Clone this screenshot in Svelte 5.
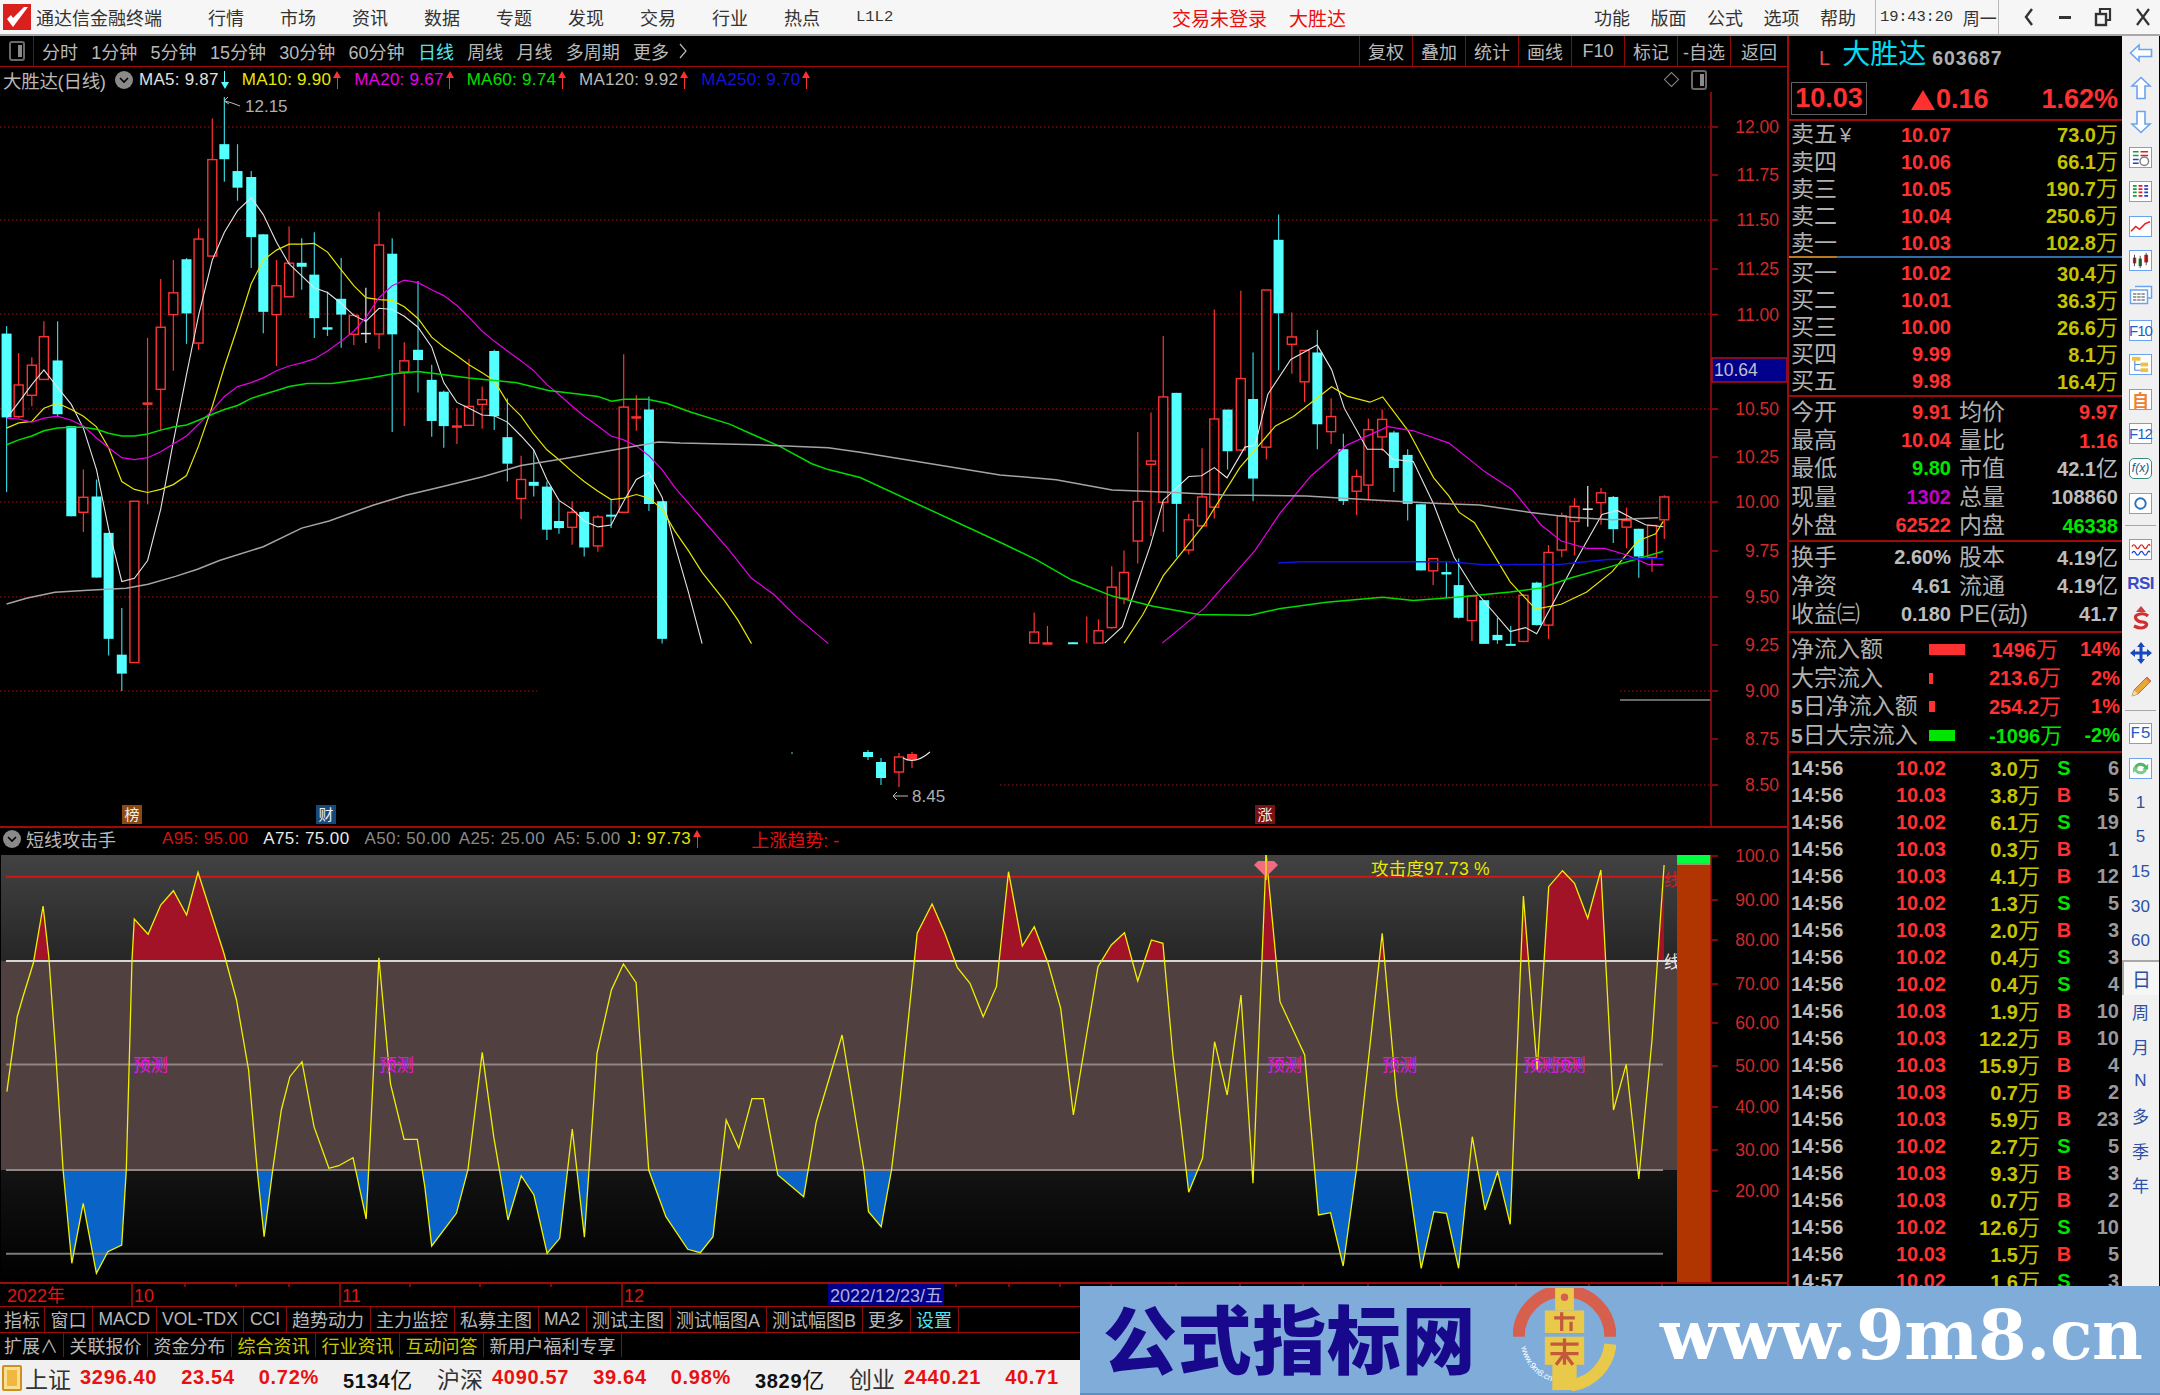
<script>
  const z9 = (a) => a.map(([x, y]) => [x / 1.823, 90 + y / 2.529]);
  const z10 = (a) => a.map(([x, y]) => [1000 + x / 1.96, 190 + y / 2.45]);
  const z7 = (a) => a.map(([x, y]) => [x / 1.742, 820 + y / 3]);
  const z8 = (a) => a.map(([x, y]) => [900 + x / 1.742, 820 + y / 3]);
  const pts = (a) => a.map(([x, y]) => x.toFixed(1) + ',' + y.toFixed(1)).join(' ');

  const c9 = [
    [12,597,1017,616,828,'c'],[34,665,830,746,826,'r'],[58,676,800,696,772,'r'],[80,585,730,624,732,'r'],[105,585,825,684,820,'c'],
    [130,850,1078,850,1078,'c'],[152,960,1118,1030,1068,'r'],[176,985,1233,1028,1233,'c'],[198,1120,1430,1120,1388,'c'],[222,1310,1520,1428,1476,'c'],
    [245,1040,1448,1040,1448,'r'],[269,627,1048,790,796,'d'],[293,478,860,600,757,'r'],[316,430,710,513,568,'r'],[340,425,642,428,565,'c'],
    [362,350,657,377,640,'r'],[387,72,420,176,420,'r'],[409,18,232,137,175,'c'],[433,137,280,205,247,'c'],[458,205,450,220,372,'c'],
    [480,365,615,365,561,'c'],[504,430,698,495,568,'r'],[527,345,523,438,523,'r'],[550,375,505,437,447,'c'],[573,360,627,467,577,'c'],
    [597,510,622,600,606,'c'],[622,425,652,528,568,'c'],[645,565,645,570,618,'r'],[667,500,640,616,619,'w'],[691,308,655,392,617,'r'],
    [715,375,865,414,618,'c'],[737,638,850,685,713,'r'],[762,483,765,657,683,'c'],[787,695,877,733,837,'c'],[809,760,905,763,850,'c'],
    [833,805,895,848,853,'d'],[855,680,850,800,848,'r'],[879,750,857,783,795,'r'],[901,657,860,660,825,'c'],[925,780,990,878,945,'c'],
    [950,925,1085,985,1033,'r'],[973,910,1028,991,1001,'c'],[997,990,1138,1003,1112,'c'],[1019,1040,1122,1090,1108,'c'],[1043,1040,1150,1068,1106,'r'],
    [1065,1065,1180,1067,1157,'c'],[1090,1075,1168,1080,1153,'r'],[1114,1035,1108,1074,1077,'c'],[1137,668,1070,802,1068,'r'],[1160,772,862,825,831,'d'],
    [1183,775,1065,808,1047,'c'],[1207,1040,1400,1040,1388,'c']
  ];
  const c10 = [
    [67,1035,1110,1083,1110,'r'],[93,1068,1110,1108,1110,'d'],[143,1108,1110,1108,1110,'c'],[170,1045,1110,1110,1110,'r'],[193,1052,1110,1080,1110,'r'],
    [219,922,1075,973,1072,'r'],[243,883,1015,937,1000,'r'],[270,593,915,763,860,'r'],[296,545,848,664,672,'r'],[320,358,838,507,765,'r'],
    [346,497,900,497,769,'c'],[370,793,893,808,882,'r'],[396,633,825,752,823,'r'],[420,293,805,561,777,'r'],[446,538,685,538,640,'c'],
    [472,247,640,462,637,'r'],[496,398,762,512,707,'c'],[522,245,660,245,630,'r'],[546,60,442,122,302,'c'],[572,300,450,360,378,'r'],
    [597,393,520,393,470,'r'],[622,343,635,398,574,'c'],[649,510,622,555,592,'r'],[673,597,772,635,762,'c'],[699,685,797,702,738,'r'],
    [722,560,757,587,723,'r'],[749,538,640,562,605,'r'],[772,590,740,594,681,'c'],[799,635,810,649,769,'c'],[825,770,932,770,932,'c'],
    [849,903,968,903,933,'r'],[875,912,1000,936,942,'c'],[899,903,1050,968,1048,'c'],[925,992,1105,995,1055,'r'],[949,1005,1112,1005,1112,'c'],
    [975,1048,1112,1090,1103,'c'],[1001,1068,1112,1112,1112,'c'],[1026,990,1108,993,1106,'r'],[1052,960,1067,962,1066,'c'],[1075,870,1100,888,1066,'r'],
    [1101,790,900,798,882,'r'],[1126,755,895,775,812,'r'],[1152,725,825,782,785,'w'],[1178,730,820,742,766,'r'],[1202,750,865,752,831,'c'],
    [1228,778,878,810,826,'r'],[1252,830,950,830,898,'c'],[1278,820,935,822,900,'r'],[1302,748,855,752,808,'r']
  ];
  const candles = [
    ...c9.map(([x,h,l,t,b,k]) => ({ x: x/1.823, h: 90+h/2.529, l: 90+l/2.529, t: 90+t/2.529, b: 90+b/2.529, k })),
    ...c10.map(([x,h,l,t,b,k]) => ({ x: 1000+x/1.96, h: 190+h/2.45, l: 190+l/2.45, t: 190+t/2.45, b: 190+b/2.45, k })),
    { x: 868, h: 750, l: 760, t: 752, b: 757, k: 'c' },
    { x: 881, h: 758, l: 785, t: 762, b: 778, k: 'c' },
    { x: 899, h: 753, l: 787, t: 757, b: 772, k: 'r' },
    { x: 912, h: 752, l: 768, t: 754, b: 760, k: 'd' }
  ];

  const ma = [
    { c: '#e4e4e4', w: 1.1, s: pts(z9([[12,830],[34,790],[58,745],[80,708],[105,752],[130,795],[152,855],[176,960],[198,1110],[222,1243],[245,1235],[269,1190],[293,1060],[316,890],[340,720],[362,570],[387,430],[409,360],[433,305],[458,272],[480,315],[504,385],[527,440],[550,470],[573,500],[597,512],[622,540],[645,570],[667,585],[691,552],[715,555],[737,572],[762,600],[787,650],[809,740],[833,790],[855,805],[879,822],[901,824],[925,840],[950,875],[973,910],[997,985],[1019,1038],[1043,1060],[1065,1090],[1090,1105],[1114,1100],[1137,1040],[1160,985],[1183,968],[1207,1030],[1230,1150],[1255,1270],[1280,1400]])) },
    { c: '#e4e4e4', w: 1.1, s: pts(z10([[205,1110],[240,1070],[270,960],[295,870],[320,760],[370,702],[395,700],[420,680],[445,705],[480,630],[500,625],[525,500],[570,415],[622,380],[650,440],[675,535],[720,635],[750,635],[770,660],[810,665],[850,770],[890,900],[930,980],[1000,1082],[1030,1072],[1052,1087],[1085,1010],[1130,905],[1180,795],[1210,785],[1240,805],[1265,820],[1300,825]])) },
    { c: '#e6e600', w: 1.2, s: pts(z9([[12,855],[34,842],[58,838],[80,805],[105,792],[130,808],[152,825],[176,852],[198,905],[222,990],[245,1010],[269,1018],[293,1010],[316,998],[340,975],[362,900],[387,800],[409,700],[433,600],[458,490],[480,430],[504,405],[527,390],[550,390],[573,388],[597,410],[622,455],[645,495],[667,525],[691,530],[715,532],[737,548],[762,578],[787,625],[809,650],[833,672],[855,695],[879,715],[901,735],[925,790],[950,825],[973,870],[997,910],[1019,935],[1043,965],[1065,990],[1090,1015],[1114,1036],[1137,1032],[1160,1023],[1183,1032],[1207,1060],[1230,1115],[1255,1165],[1280,1220],[1320,1290],[1345,1340],[1370,1400]])) },
    { c: '#e6e600', w: 1.2, s: pts(z10([[243,1110],[280,1040],[320,945],[400,820],[470,680],[540,578],[575,555],[650,482],[680,505],[725,520],[750,507],[800,590],[850,705],[880,750],[900,790],[930,815],[1000,960],[1050,1027],[1100,1015],[1150,985],[1200,935],[1250,860],[1285,842],[1300,812]])) },
    { c: '#e600e6', w: 1.2, s: pts(z9([[12,830],[34,832],[58,840],[80,830],[105,825],[130,835],[152,850],[176,880],[198,905],[222,930],[245,935],[269,930],[293,915],[316,895],[340,875],[362,845],[387,810],[409,775],[433,750],[458,740],[480,728],[504,710],[527,698],[550,690],[573,680],[597,660],[622,635],[645,610],[667,575],[691,525],[715,495],[737,481],[762,487],[787,505],[809,520],[833,545],[855,575],[879,610],[901,635],[925,660],[950,685],[973,710],[997,745],[1019,770],[1043,800],[1065,825],[1090,850],[1114,875],[1137,885],[1160,900],[1183,925],[1207,960],[1230,1005],[1255,1045],[1280,1085],[1330,1165],[1370,1235],[1410,1275],[1450,1330],[1510,1400]])) },
    { c: '#e600e6', w: 1.2, s: pts(z10([[318,1110],[400,1025],[500,883],[550,790],[610,700],[680,625],[760,580],[810,590],[880,620],[950,690],[1005,735],[1060,820],[1100,860],[1150,878],[1185,878],[1230,895],[1270,917],[1300,918]])) },
    { c: '#00dc00', w: 1.5, s: pts([...z9([[12,897],[34,885],[58,875],[80,862],[105,855],[130,853],[152,853],[176,858],[198,868],[222,875],[245,875],[269,870],[293,860],[316,852],[340,847],[362,835],[387,820],[409,808],[433,798],[458,780],[480,770],[504,760],[527,750],[560,742],[605,742],[645,735],[680,727],[715,718],[762,712],[810,720],[855,728],[901,735],[940,740],[1000,760],[1050,768],[1090,775],[1115,787],[1137,782],[1180,782],[1215,792],[1260,815],[1330,845],[1370,870],[1420,900],[1480,945],[1510,960],[1568,980]]), ...z10([[0,863],[70,905],[140,955],[220,995],[300,1020],[390,1040],[490,1042],[550,1025],[640,1010],[750,998],[810,1006],[900,997],[1000,985],[1060,975],[1120,950],[1190,925],[1240,907],[1300,885]])]) },
    { c: '#a4a4a4', w: 1.5, s: pts([...z9([[12,1300],[50,1285],[100,1270],[160,1265],[230,1260],[270,1250],[320,1230],[360,1212],[400,1190],[480,1155],[550,1108],[600,1090],[680,1050],[740,1025],[800,1005],[880,978],[950,950],[1030,932],[1100,915],[1180,895],[1200,890],[1240,893],[1380,897],[1510,905],[1568,916]]), ...z10([[0,698],[110,710],[220,735],[320,740],[440,747],[600,750],[740,760],[860,768],[940,772],[1040,790],[1120,802],[1200,808],[1290,803]])]) },
    { c: '#1010e8', w: 1.5, s: pts(z10([[545,914],[590,911],[880,911],[950,918],[1100,917],[1190,905],[1300,903]])) }
  ];

  const grid = [[127,0],[220,0],[314,0],[409,0],[502,0],[597,0],[691,0,537],[691,1620],[785,1000]];
  const priceLabels = [['12.00',127],['11.75',175],['11.50',220],['11.25',269],['11.00',314.5],['10.50',409],['10.25',457],['10.00',502],['9.75',551],['9.50',597],['9.25',645],['9.00',691],['8.75',739],['8.50',785]];

  const jLine = [
    ...z7([[12,815],[18,740],[30,590],[40,530],[58,430],[75,258],[85,410],[97,700],[110,1050],[125,1330],[145,1150],[168,1360],[188,1295],[212,1275],[220,1050],[230,420],[234,297],[258,343],[280,255],[302,212],[325,285],[345,157],[390,400],[412,540],[433,750],[448,1050],[460,1250],[475,1050],[490,870],[505,770],[526,725],[547,920],[573,1045],[590,1037],[615,1013],[638,1197],[645,950],[660,413],[680,790],[704,958],[727,958],[740,1100],[752,1278],[795,1180],[815,1050],[840,697],[860,950],[885,1200],[908,1067],[930,1125],[953,1300],[975,1255],[997,927],[1018,1252],[1040,700],[1065,510],[1086,432],[1108,488],[1130,1050],[1160,1190],[1198,1288],[1220,1298],[1242,1250],[1265,900],[1287,985],[1310,836],[1330,836],[1355,1065],[1400,1130],[1422,905],[1467,645],[1505,1050],[1513,1175],[1535,1220],[1553,1050]]),
    ...z8([[0,840],[30,340],[56,252],[78,340],[100,443],[122,490],[145,590],[168,500],[189,155],[213,378],[234,320],[258,430],[280,565],[302,885],[325,645],[345,440],[368,375],[391,338],[414,483],[438,360],[458,370],[475,700],[503,1117],[527,1015],[548,665],[570,825],[594,525],[615,1090],[638,105],[662,545],[705,705],[729,1185],[750,1178],[772,1338],[795,1050],[840,340],[865,830],[908,1345],[930,1175],[952,1180],[973,1345],[997,950],[1019,1170],[1041,1055],[1063,1213],[1086,228],[1110,750],[1130,200],[1154,152],[1175,190],[1198,295],[1221,150],[1243,870],[1265,733],[1287,1077],[1310,660],[1331,135]])
  ];
  const xa = jLine[0][0], xb = jLine[jLine.length - 1][0];
  const jStr = pts(jLine);
  const redPoly = jStr + ` ${xb},961 ${xa},961`;
  const bluePoly = jStr + ` ${xb},1170 ${xa},1170`;
  const indLabels = [['100.0',856],['90.00',900],['80.00',940],['70.00',984],['60.00',1023],['50.00',1066],['40.00',1107],['30.00',1150],['20.00',1191]];
  const predict = [133,379,1267,1382];
  const dateTicks = [185,236,289,410,480,551,956,1009,1060,1111,1176,1240,1303,1368,1441,1516,1589,1662];

  const menus = ['行情','市场','资讯','数据','专题','发现','交易','行业','热点','L1L2'];
  const rightMenus = ['功能','版面','公式','选项','帮助'];
  const periods = ['分时','1分钟','5分钟','15分钟','30分钟','60分钟','日线','周线','月线','多周期','更多'];
  const tools = ['复权','叠加','统计','画线','F10','标记','-自选','返回'];
  const sells = [['卖五','10.07','73.0'],['卖四','10.06','66.1'],['卖三','10.05','190.7'],['卖二','10.04','250.6'],['卖一','10.03','102.8']];
  const buys = [['买一','10.02','30.4'],['买二','10.01','36.3'],['买三','10.00','26.6'],['买四','9.99','8.1'],['买五','9.98','16.4']];
  const stats = [
    ['今开','9.91','red','均价','9.97','red',''],['最高','10.04','red','量比','1.16','red',''],['最低','9.80','grn','市值','42.1','gry','亿'],
    ['现量','1302','mag','总量','108860','gry',''],['外盘','62522','red','内盘','46338','grn','']
  ];
  const stats2 = [['换手','2.60%','股本','4.19'],['净资','4.61','流通','4.19'],['收益㈢','0.180','PE(动)','41.7']];
  const flows = [
    ['','净流入额','red','b36','1496','14%'],['','大宗流入','red','b4','213.6','2%'],['5日','净流入额','red','b6','254.2','1%'],['5日','大宗流入','grn','b26','-1096','-2%']
  ];
  const ticks = [
    ['14:56','10.02','3.0','S','6'],['14:56','10.03','3.8','B','5'],['14:56','10.02','6.1','S','19'],['14:56','10.03','0.3','B','1'],['14:56','10.03','4.1','B','12'],
    ['14:56','10.02','1.3','S','5'],['14:56','10.03','2.0','B','3'],['14:56','10.02','0.4','S','3'],['14:56','10.02','0.4','S','4'],['14:56','10.03','1.9','B','10'],
    ['14:56','10.03','12.2','B','10'],['14:56','10.03','15.9','B','4'],['14:56','10.03','0.7','B','2'],['14:56','10.03','5.9','B','23'],['14:56','10.02','2.7','S','5'],
    ['14:56','10.03','9.3','B','3'],['14:56','10.03','0.7','B','2'],['14:56','10.02','12.6','S','10'],['14:56','10.03','1.5','B','5'],['14:57','10.02','1.6','S','3']
  ];
  const tabs1 = [['指标','f1'],['窗口'],['MACD','la'],['VOL-TDX','la'],['CCI','la'],['趋势动力'],['主力监控'],['私募主图'],['MA2','la'],['测试主图'],['测试幅图A'],['测试幅图B'],['更多'],['设置','cy']];
  const tabs2 = [['扩展∧','f2'],['关联报价'],['资金分布'],['综合资讯','yl'],['行业资讯','yl'],['互动问答','yl'],['新用户福利专享']];
  const small = ['1','5','15','30','60'];
  const lower = ['周','月','N','多','季','年'];
</script>

<div class="app">
  <header class="top">
    <svg class="logo" viewBox="0 0 28 26"><rect width="28" height="26" fill="#d9201c"/><path d="M4 15 L10 23 L25 3 L21 3 L10 14 L8 11 Z" fill="#fff"/></svg>
    <span class="brand">通达信金融终端</span>
    <nav class="menu">{#each menus as m}<span class:mono={m === 'L1L2'}>{m}</span>{/each}</nav>
    <div class="login"><span>交易未登录</span><span>大胜达</span></div>
    <nav class="menu rm">{#each rightMenus as m}<span>{m}</span>{/each}</nav>
    <div class="clock"><span class="t">19:43:20</span><span>周一</span></div>
    <div class="win">
      <svg width="12" height="22" viewBox="0 0 12 22"><path d="M9 3 L3 11 L9 19" fill="none" stroke="#333" stroke-width="2.4"/></svg>
      <svg width="14" height="22" viewBox="0 0 14 22"><rect x="1" y="10" width="12" height="3" fill="#333"/></svg>
      <svg width="18" height="22" viewBox="0 0 18 22"><rect x="2" y="8" width="10" height="11" fill="none" stroke="#333" stroke-width="2.4"/><path d="M6 7 V3 H16 V14 H13" fill="none" stroke="#333" stroke-width="2.2"/></svg>
      <svg width="16" height="22" viewBox="0 0 16 22"><path d="M2 3 L14 19 M14 3 L2 19" stroke="#333" stroke-width="2.2"/></svg>
    </div>
  </header>

  <div class="body">
    <main class="left">
      <div class="toolbar">
        <div class="tbtn"><span class="panelbtn"></span></div>
        <div class="periods">
          {#each periods as p}<span class:act={p === '日线'}>{p}</span>{/each}
          <svg class="chev" width="10" height="18" viewBox="0 0 10 18"><path d="M2 2 L8 9 L2 16" fill="none" stroke="#b8b8b8" stroke-width="1.2"/></svg>
        </div>
        <div class="tools">{#each tools as t}<span>{t}</span>{/each}</div>
      </div>

      <div class="infobar">
        <span class="name">大胜达(日线)</span>
        <span class="dot"><svg width="14" height="14" viewBox="0 0 14 14"><path d="M3 5 L7 9 L11 5" fill="none" stroke="#000" stroke-width="1.6"/></svg></span>
        <span class="mai w">MA5: 9.87<i class="ar dn"></i></span>
        <span class="mai y">MA10: 9.90<i class="ar"></i></span>
        <span class="mai m">MA20: 9.67<i class="ar"></i></span>
        <span class="mai g">MA60: 9.74<i class="ar"></i></span>
        <span class="mai s">MA120: 9.92<i class="ar"></i></span>
        <span class="mai bl">MA250: 9.70<i class="ar"></i></span>
        <span class="spacer"></span>
        <span class="diamond"></span>
        <span class="panelbtn sm"></span>
      </div>

      <svg class="main" viewBox="0 92 1787 734" width="1787" height="734">
        {#each grid as [y, x0, x1]}
          <line x1={x0} x2={x1 ?? 1711} y1={y} y2={y} class="gridl"/>
        {/each}
        <line x1="1620" x2="1711" y1="700" y2="700" stroke="#8a8a8a" stroke-width="1.5"/>
        <line x1="1711" x2="1711" y1="92" y2="826" class="axis"/>
        {#each priceLabels as [t, y]}
          <line x1="1712" x2="1718" y1={y} y2={y} class="axis"/>
          <text x="1779" y={y + 6} class="ax">{t}</text>
        {/each}
        <rect x="1712" y="358" width="75" height="24" fill="#00008c" stroke="#b01010" stroke-width="1.5"/>
        <text x="1714" y="376" class="boxt">10.64</text>

        {#each candles as c}
          {#if c.k === 'c'}
            <line x1={c.x} x2={c.x} y1={c.h} y2={c.l} stroke="#35d0d8" stroke-width="1.2"/>
            <rect x={c.x - 5} y={c.t} width="10" height={Math.max(c.b - c.t, 2)} fill="#54ffff"/>
          {:else if c.k === 'w'}
            <line x1={c.x} x2={c.x} y1={c.h} y2={c.l} stroke="#e8e8e8" stroke-width="1.2"/>
            <line x1={c.x - 5} x2={c.x + 5} y1={c.t} y2={c.t} stroke="#e8e8e8" stroke-width="1.5"/>
          {:else if c.k === 'd'}
            <line x1={c.x} x2={c.x} y1={c.h} y2={c.l} class="rw"/>
            <rect x={c.x - 5} y={c.t} width="10" height={Math.max(c.b - c.t, 2.5)} fill="#ff3232"/>
          {:else}
            <line x1={c.x} x2={c.x} y1={c.h} y2={c.t} class="rw"/>
            <line x1={c.x} x2={c.x} y1={c.b} y2={c.l} class="rw"/>
            <rect x={c.x - 4.5} y={c.t} width="9" height={c.b - c.t} fill="#000" class="rb"/>
          {/if}
        {/each}

        {#each ma as l}
          <polyline points={l.s} fill="none" stroke={l.c} stroke-width={l.w}/>
        {/each}
        <path d="M903 758 Q915 765 930 752" fill="none" stroke="#e8e8e8" stroke-width="1.1"/>
        <circle cx="792" cy="753" r="1" fill="#3a8a8a"/>

        <path d="M224 101 L228 97 M224 101 L229 104 M225 101 L232 103 L240 106" fill="none" stroke="#bbb" stroke-width="1"/>
        <text x="245" y="112" class="hl">12.15</text>
        <path d="M908 796 H893 M893 796 L897 792 M893 796 L897 800" fill="none" stroke="#bbb" stroke-width="1"/>
        <text x="912" y="802" class="hl">8.45</text>

        <rect x="122" y="805" width="20" height="19" fill="#8c4a12"/>
        <text x="132" y="820" class="tag">榜</text>
        <rect x="316" y="805" width="20" height="19" fill="#174a7c"/>
        <text x="326" y="820" class="tag">财</text>
        <rect x="1255" y="805" width="20" height="19" fill="#7a1212"/>
        <text x="1265" y="820" class="tag">涨</text>
      </svg>

      <div class="indhead">
        <span class="dot"><svg width="14" height="14" viewBox="0 0 14 14"><path d="M3 5 L7 9 L11 5" fill="none" stroke="#000" stroke-width="1.6"/></svg></span>
        <span class="indname">短线攻击手</span>
        <span class="ia dr">A95: 95.00</span>
        <span class="ia w2">A75: 75.00</span>
        <span class="ia gy g8">A50: 50.00</span>
        <span class="ia gy g9">A25: 25.00</span>
        <span class="ia gy g7">A5: 5.00</span>
        <span class="ia yl2">J: 97.73<i class="ar"></i></span>
        <span class="trend">上涨趋势: -</span>
      </div>

      <svg class="ind" viewBox="0 855 1787 451" width="1787" height="451">
        <defs>
          <linearGradient id="bandA" x1="0" x2="0" y1="0" y2="1"><stop offset="0" stop-color="#424242"/><stop offset="1" stop-color="#262626"/></linearGradient>
          <linearGradient id="bandC" x1="0" x2="0" y1="0" y2="1"><stop offset="0" stop-color="#131313"/><stop offset="1" stop-color="#000"/></linearGradient>
          <clipPath id="upClip"><rect x="0" y="855" width="1680" height="106"/></clipPath>
          <clipPath id="dnClip"><rect x="0" y="1170" width="1680" height="112"/></clipPath>
        </defs>
        <rect x="1" y="855" width="1676" height="106" fill="url(#bandA)"/>
        <rect x="1" y="961" width="1676" height="209" fill="#514040"/>
        <rect x="1" y="1170" width="1676" height="112" fill="url(#bandC)"/>

        <polygon points={redPoly} fill="#a31327" clip-path="url(#upClip)"/>
        <polygon points={bluePoly} fill="#0a63c7" clip-path="url(#dnClip)"/>

        <line x1="6" x2="1677" y1="876.7" y2="876.7" stroke="#d01818" stroke-width="2"/>
        <line x1="6" x2="1677" y1="961" y2="961" stroke="#d8d4d4" stroke-width="2"/>
        <line x1="6" x2="1663" y1="1064.5" y2="1064.5" stroke="#8e8585" stroke-width="2"/>
        <line x1="6" x2="1663" y1="1170" y2="1170" stroke="#8e8888" stroke-width="2"/>
        <line x1="6" x2="1663" y1="1253.7" y2="1253.7" stroke="#7c7c7c" stroke-width="2"/>

        <polyline points={jStr} fill="none" stroke="#f0f000" stroke-width="1.3"/>

        {#each predict as x}
          <text x={x} y="1071" class="pred">预测</text>
        {/each}
        <text x="1523" y="1071" class="pred tight">预测预测</text>
        <text x="1371" y="875" class="atk">攻击度97.73 %</text>
        <polygon points="1254,865 1258,861 1274,861 1278,865 1266,877" fill="#f06a80"/>
        <line x1="1266" x2="1266" y1="855" y2="880" stroke="#f0f000" stroke-width="1.3"/>
        <text x="1664" y="886" class="xian rd">线</text>
        <text x="1664" y="968" class="xian">线</text>

        <rect x="1677" y="855" width="34" height="8" fill="#00ff3c"/>
        <rect x="1677" y="863" width="34" height="2" fill="#9a9a6a"/>
        <rect x="1677" y="865" width="34" height="417" fill="#b03500"/>
        <line x1="1711" x2="1711" y1="855" y2="1282" class="axis"/>
        {#each indLabels as [t, y]}
          <line x1="1712" x2="1718" y1={y} y2={y} class="axis"/>
          <text x="1779" y={y + 6} class="ax">{t}</text>
        {/each}

        <rect x="0" y="1282" width="1787" height="2" fill="#a00a0a"/>
        {#each dateTicks as x}<line x1={x} x2={x} y1="1284" y2="1287" class="axis"/>{/each}
        {#each [[132,'10'],[340,'11'],[622,'12']] as [x, t]}
          <line x1={x} x2={x} y1="1284" y2="1306" class="axis"/>
          <text x={x + 2} y="1302" class="dt">{t}</text>
        {/each}
        <text x="7" y="1302" class="dt">2022年</text>
        <rect x="828" y="1284" width="116" height="21" fill="#00008c"/>
        <text x="830" y="1302" class="dtb">2022/12/23/五</text>
      </svg>

      <div class="tabs">
        {#each tabs1 as [t, c]}<span class={c}>{t}</span>{/each}
      </div>
      <div class="tabs">
        {#each tabs2 as [t, c]}<span class={c}>{t}</span>{/each}
      </div>
    </main>

    <aside class="quote">
      <div class="qhead"><span class="l">L</span><span class="qname">大胜达</span><span class="qcode">603687</span></div>
      <div class="qprice">
        <span class="pbox">10.03</span>
        <span class="chg"><i class="tri"></i>0.16</span>
        <span class="pct">1.62%</span>
      </div>
      <div class="lv-block first">
        {#each sells as [a, b, c], i}
          <div class="lv">
            <span class="lb">{a}{#if i === 0}<em class="yen">¥</em>{/if}</span>
            <span class="v red">{b}</span>
            <span class="v yel">{c}<u>万</u></span>
          </div>
        {/each}
      </div>
      <div class="midline"><i></i></div>
      <div class="lv-block">
        {#each buys as [a, b, c]}
          <div class="lv">
            <span class="lb">{a}</span>
            <span class="v red">{b}</span>
            <span class="v yel">{c}<u>万</u></span>
          </div>
        {/each}
      </div>
      <div class="sec stats">
        {#each stats as [a, b, bc, d, e, ec, u]}
          <div class="st">
            <span class="lb">{a}</span><span class="v {bc}">{b}</span>
            <span class="lb2">{d}</span><span class="v {ec}">{e}<u>{u}</u></span>
          </div>
        {/each}
      </div>
      <div class="sec stats s2">
        {#each stats2 as [a, b, d, e], i}
          <div class="st">
            <span class="lb">{a}</span><span class="v gry">{b}</span>
            <span class="lb2">{d}</span><span class="v gry">{e}<u>{i < 2 ? '亿' : ''}</u></span>
          </div>
        {/each}
      </div>
      <div class="sec flows">
        {#each flows as [p, a, c, bw, v, pc]}
          <div class="fl">
            <span class="lb">{#if p}<b>5</b>日{/if}{a}</span>
            <span class="barcell"><i class="bar {bw} {c}"></i></span>
            <span class="v {c}">{v}<u>万</u></span>
            <span class="v {c}">{pc}</span>
          </div>
        {/each}
      </div>
      <div class="sec ticks">
        {#each ticks as [t, p, v, f, n]}
          <div class="tk">
            <span class="v gry tl">{t}</span>
            <span class="v red">{p}</span>
            <span class="v yel">{v}<u>万</u></span>
            <span class="fg" class:red={f === 'B'} class:grn={f === 'S'}>{f}</span>
            <span class="v gry2">{n}</span>
          </div>
        {/each}
      </div>
    </aside>

    <aside class="side">
      <div class="si"><svg width="24" height="20" viewBox="0 0 24 20"><path d="M1.5 10 L10 2 V6.5 H22.5 V13.5 H10 V18 Z" fill="#fff" stroke="#6aa3f2" stroke-width="1.6"/></svg></div>
      <div class="si"><svg width="22" height="24" viewBox="0 0 22 24"><path d="M11 1.5 L20 10 H15 V22.5 H7 V10 H2 Z" fill="#fff" stroke="#6aa3f2" stroke-width="1.6"/></svg></div>
      <div class="si"><svg width="22" height="24" viewBox="0 0 22 24"><path d="M11 22.5 L20 14 H15 V1.5 H7 V14 H2 Z" fill="#fff" stroke="#6aa3f2" stroke-width="1.6"/></svg></div>
      <div class="si"><svg class="box" viewBox="0 0 22 20"><g stroke-width="1.6"><path d="M3 4 H9 M3 8 H9" stroke="#1a9a3a"/><path d="M11 4 H19 M11 8 H19" stroke="#e02020"/><path d="M3 12 H9 M3 16 H9" stroke="#2040c0"/></g><circle cx="15" cy="14" r="4.5" fill="#fff" stroke="#808080" stroke-width="1.5"/></svg></div>
      <div class="si"><svg class="box" viewBox="0 0 22 20"><g stroke-width="1.8"><path d="M3 4 H7 M3 7.5 H7 M3 11 H7 M3 14.5 H7" stroke="#1a9a3a"/><path d="M9 4 H13 M9 7.5 H13 M9 11 H13 M9 14.5 H13" stroke="#e02020"/><path d="M15 4 H19 M15 7.5 H19 M15 11 H19 M15 14.5 H19" stroke="#2040d0"/></g></svg></div>
      <div class="si"><svg class="box" viewBox="0 0 22 20"><path d="M1 15 L6 10 L10 13 L16 7 L21 5" fill="none" stroke="#e02020" stroke-width="1.6"/></svg></div>
      <div class="si"><svg class="box" viewBox="0 0 22 20"><g fill="#e01818"><rect x="3" y="7" width="3.5" height="6"/><rect x="15" y="4" width="4" height="8"/></g><rect x="9" y="8" width="3.5" height="8" fill="#0f8a30"/><path d="M4.7 4 V16 M10.7 5 V18 M17 2 V15" stroke="#222" stroke-width=".8"/></svg></div>
      <div class="si"><svg width="24" height="20" viewBox="0 0 24 20"><path d="M6 1.5 H22.5 V13 H19" fill="#fff" stroke="#6aa3f2" stroke-width="1.5"/><rect x="1.5" y="5" width="17" height="13.5" fill="#fff" stroke="#6aa3f2" stroke-width="1.5"/><path d="M4 9 H16 M4 12 H16 M4 15 H16" stroke="#808080" stroke-width="1.4" stroke-dasharray="3.4 .8"/></svg></div>
      <div class="si"><span class="box txt">F10</span></div>
      <div class="si"><svg class="box" viewBox="0 0 22 20"><rect x="2" y="2" width="9" height="4" fill="#f0c040"/><rect x="11" y="8" width="8" height="4" fill="#f0c040"/><rect x="11" y="14" width="8" height="4" fill="#f0c040"/><path d="M5 6 V16 H11 M5 10 H11" fill="none" stroke="#5a8ad0" stroke-width="1.2"/></svg></div>
      <div class="si"><span class="box txt or">自</span></div>
      <div class="si"><span class="box txt">F12</span></div>
      <div class="si"><span class="box txt fx">f(x)</span></div>
      <div class="si"><svg class="box" viewBox="0 0 22 20"><circle cx="11" cy="10" r="5.5" fill="none" stroke="#2a70c0" stroke-width="2"/></svg></div>
      <div class="sep"></div>
      <div class="si"><svg class="box" viewBox="0 0 22 20"><path d="M2 7 Q4 3 6 7 T10 7 T14 7 T18 7 T21 6" fill="none" stroke="#e02020" stroke-width="1.3"/><path d="M2 14 Q4 10 6 14 T10 14 T14 14 T18 14 T21 13" fill="none" stroke="#2040d0" stroke-width="1.3"/></svg></div>
      <div class="si"><span class="rsi">RSI</span></div>
      <div class="si"><svg width="22" height="26" viewBox="0 0 22 26"><path d="M11 1 L16 7 H6 Z" fill="#c84040"/><path d="M18 11 Q15 8 10 9 Q4 10 6 14 Q8 17 13 17 Q18 18 16 21 Q12 25 4 21" fill="none" stroke="#d03030" stroke-width="3.2"/></svg></div>
      <div class="si"><svg width="24" height="24" viewBox="0 0 24 24"><path d="M12 1 L16 6 H13.5 V10.5 H18 V8 L23 12 L18 16 V13.5 H13.5 V18 H16 L12 23 L8 18 H10.5 V13.5 H6 V16 L1 12 L6 8 V10.5 H10.5 V6 H8 Z" fill="#1848c0"/></svg></div>
      <div class="si"><svg width="24" height="24" viewBox="0 0 24 24"><path d="M3 21 L5 15 L18 2 L22 6 L9 19 Z" fill="#e8a838" stroke="#8a6a30" stroke-width=".8"/><path d="M16.5 3.5 L18 2 L22 6 L20.5 7.5 Z" fill="#e87060"/><path d="M3 21 L5 15 L9 19 Z" fill="#f0d8b0"/></svg></div>
      <div class="sep"></div>
      <div class="si"><span class="box txt f5">F5</span></div>
      <div class="si"><svg class="box" viewBox="0 0 22 20"><path d="M4 9 Q6 4 11 4 Q15 4 17 7 L19 5 V11 H13 L15 9 Q13 7 11 7 Q8 7 7 10 Z" fill="#52b868"/><path d="M18 11 Q16 16 11 16 Q7 16 5 13 L3 15 V9 H9 L7 11 Q9 13 11 13 Q14 13 15 10 Z" fill="#7acc88"/></svg></div>
      {#each small as s}<div class="si n">{s}</div>{/each}
      <div class="si n day">日</div>
      {#each lower as s}<div class="si n">{s}</div>{/each}
    </aside>
  </div>

  <footer class="status">
    <span class="sqi"></span>
    <span class="sl">上证</span><span class="sv first">3296.40</span><span class="sv">23.54</span><span class="sv">0.72%</span><span class="sk">5134<u>亿</u></span>
    <span class="sl nx">沪深</span><span class="sv first">4090.57</span><span class="sv">39.64</span><span class="sv">0.98%</span><span class="sk">3829<u>亿</u></span>
    <span class="sl nx">创业</span><span class="sv first">2440.21</span><span class="sv">40.71</span>
  </footer>

  <div class="wm">
    <span class="wt">公式指标网</span>
    <svg class="wl" viewBox="0 0 110 110" width="103" height="103">
      <defs><path id="wmArc" d="M9 63 A 47 47 0 0 0 46 101"/></defs>
      <path d="M6 52 A 49 49 0 0 1 104 52" fill="none" stroke="#d6604d" stroke-width="13"/>
      <path d="M104 60 A 49 49 0 0 1 62 104" fill="none" stroke="#e9c94a" stroke-width="13"/>
      <g fill="#e9c94a">
        <rect x="45" y="0" width="20" height="24"/>
        <rect x="34" y="24" width="42" height="24"/>
        <rect x="34" y="52" width="42" height="30"/>
        <rect x="42" y="80" width="26" height="29"/>
      </g>
      <circle cx="55" cy="10" r="4" fill="#d6604d"/>
      <g fill="none" stroke="#c4583c" stroke-width="3.5">
        <path d="M44 32 H66 M52 26 V46 M62 36 V46"/>
        <path d="M40 60 H70 M40 70 H70 M55 54 V82 M46 82 L55 70 L64 82"/>
      </g>
      <text class="wtp"><textPath href="#wmArc">www.9m8.cn</textPath></text>
    </svg>
    <span class="wu">www.9m8.cn</span>
  </div>
</div>

<style>
  :global(body) { margin: 0; background: #000; }
  .app {
    width: 2160px; height: 1395px; position: relative; overflow: hidden; background: #000;
    display: flex; flex-direction: column;
    font-family: "Liberation Sans", "Noto Sans CJK SC", sans-serif; color: #c0c0c0;
  }
  u { text-decoration: none; font-weight: 400; font-size: 22px; }
  i, em { font-style: normal; }

  /* top bar */
  .top {
    height: 34px; flex: none; background: #f6f6f6; border-bottom: 2px solid #a8a8a8;
    display: flex; align-items: center; color: #333; font-size: 18px;
  }
  .logo { width: 28px; height: 26px; margin-left: 3px; flex: none; }
  .brand { margin-left: 5px; width: 126px; white-space: nowrap; }
  .menu { display: flex; gap: 37px; margin-left: 46px; align-items: center; }
  .menu span { width: 35px; white-space: nowrap; }
  .menu .mono { font-family: "Liberation Mono", monospace; font-size: 15.5px; }
  .login { display: flex; gap: 22px; margin-left: 281px; color: #e81010; font-size: 19px; }
  .rm { gap: 21.5px; margin-left: 248px; }
  .clock {
    margin-left: 20px; width: 124px; height: 34px; box-sizing: border-box; padding-left: 4px; display: flex; align-items: center; gap: 10px;
    border-left: 1px solid #bbb; border-right: 1px solid #bbb; font-size: 17px;
  }
  .clock .t { font-family: "Liberation Mono", monospace; font-size: 15.5px; letter-spacing: -0.2px; }
  .win { display: flex; align-items: center; gap: 22.5px; margin-left: 24px; }

  .body { height: 1324px; flex: none; display: flex; }

  /* left column */
  .left { width: 1787px; flex: none; display: flex; flex-direction: column; }
  .toolbar {
    height: 30px; flex: none; display: flex; align-items: center; border-bottom: 1.5px solid #a00a0a; font-size: 18px; color: #b8b8b8;
  }
  .tbtn { width: 34px; height: 30px; display: flex; align-items: center; justify-content: center; border-right: 1px solid #7a0a0a; box-sizing: border-box; }
  .panelbtn { display: block; width: 16px; height: 20px; border: 2px solid #6a6a6a; border-radius: 3px; box-sizing: border-box; position: relative; }
  .panelbtn::after { content: ""; position: absolute; right: 1px; top: 2px; bottom: 2px; width: 4px; background: #8a8a8a; }
  .panelbtn.sm { margin-right: 80px; margin-left: 14px; }
  .periods { display: flex; align-items: center; gap: 13.3px; margin-left: 8px; white-space: nowrap; }
  .periods .act { color: #4fe6ee; }
  .chev { margin-left: -4px; }
  .tools { margin-left: auto; display: flex; height: 30px; }
  .tools span { width: 52px; border-left: 1px solid #8a0a0a; display: flex; align-items: center; justify-content: center; white-space: nowrap; }
  .tools span:last-child { width: 56px; }

  .infobar { height: 25px; flex: none; display: flex; align-items: center; font-size: 17px; letter-spacing: .25px; white-space: nowrap; padding-left: 3px; box-sizing: border-box; }
  .name { font-size: 18.5px; letter-spacing: -.3px; width: 112px; color: #b8b8b8; }
  .dot { width: 18px; height: 18px; border-radius: 50%; background: #8a8a8a; display: flex; align-items: center; justify-content: center; flex: none; }
  .infobar .dot { margin-right: 6px; }
  .mai { margin-right: 12px; display: flex; align-items: center; }
  .ar { display: inline-block; width: 10px; height: 18px; position: relative; margin-left: 1px; flex: none; }
  .ar::before { content: ""; position: absolute; left: 1px; top: 0; border-left: 4px solid transparent; border-right: 4px solid transparent; border-bottom: 7px solid #ff3030; }
  .ar::after { content: ""; position: absolute; left: 4.5px; width: 1px; top: 5px; bottom: 0; background: #ff3030; }
  .ar.dn::before { top: auto; bottom: 0; border-bottom: 0; border-top: 7px solid #54ffff; }
  .ar.dn::after { top: 0; bottom: 5px; background: #54ffff; }
  .w { color: #e0e0e0; } .y { color: #e8e800; } .m { color: #e600e6; } .g { color: #00e000; } .s { color: #b8b8b8; } .bl { color: #1414d8; }
  .spacer { flex: 1; }
  .diamond { width: 11px; height: 11px; border: 1px solid #8a8a8a; transform: rotate(45deg); box-sizing: border-box; }

  .main { display: block; flex: none; }
  .gridl { stroke: #a81010; stroke-width: 1; stroke-dasharray: 1.5 2.5; }
  .axis { stroke: #a80c0c; stroke-width: 1.5; }
  .ax { fill: #d22828; font-size: 17.5px; text-anchor: end; }
  .boxt { fill: #c0c0d0; font-size: 17.5px; }
  .rw { stroke: #ff3232; stroke-width: 1.2; }
  .rb { stroke: #ff3232; stroke-width: 1.4; }
  .hl { fill: #b0b0b0; font-size: 17px; text-anchor: start; }
  .tag { fill: #eee; font-size: 15px; text-anchor: middle; }

  .indhead {
    flex: none; height: 29px; box-sizing: border-box; border-top: 2px solid #a00a0a; padding: 0 0 6px 3px;
    display: flex; align-items: center; font-size: 17px; letter-spacing: .4px; white-space: nowrap;
  }
  .indname { margin-left: 5px; width: 136px; font-size: 18px; letter-spacing: 0; color: #b8b8b8; }
  .ia { margin-right: 15px; display: flex; align-items: center; }
  .ia.g8 { margin-right: 8px; } .ia.g9 { margin-right: 9px; } .ia.g7 { margin-right: 7px; }
  .dr { color: #d81010; } .w2 { color: #e8e8e8; } .gy { color: #8a8a8a; } .yl2 { color: #e0e000; }
  .trend { color: #e01010; margin-left: 34px; font-size: 18px; letter-spacing: 0; }

  .ind { display: block; flex: none; overflow: visible; }
  .pred { fill: #e616e6; font-size: 17.5px; }
  .pred.tight { letter-spacing: -2.5px; }
  .atk { fill: #e8e800; font-size: 17.5px; letter-spacing: .2px; }
  .xian { fill: #e8e8e8; font-size: 17px; }
  .xian.rd { fill: #d02020; }
  .dt { fill: #e01414; font-size: 18px; }
  .dtb { fill: #b0b0d8; font-size: 18px; letter-spacing: 0; }

  .tabs {
    flex: none; height: 25.5px; display: flex; box-sizing: border-box; border-top: 1.5px solid #a00a0a;
    font-size: 18px; color: #b8b8b8;
  }
  .tabs span { padding: 0 5.5px; border-right: 1px solid #8a0a0a; display: flex; align-items: center; white-space: nowrap; }
  .tabs .f1 { padding: 0 4px; }
  .tabs .f2 { padding: 0 5px 0 4px; }
  .tabs .la { font-size: 17.5px; }
  .tabs .cy { color: #4fe6ee; }
  .tabs .yl { color: #c8c800; }

  /* quote */
  .quote { width: 335px; flex: none; border-left: 2px solid #a00a0a; box-sizing: border-box; overflow: hidden; font-size: 20px; }
  .qhead { height: 44px; display: flex; align-items: center; }
  .l { color: #e84a4a; font-size: 20px; margin-left: 30px; }
  .qname { color: #00dcf0; font-size: 28px; margin: -6px 0 0 12px; line-height: 1; }
  .qcode { font-weight: 700; color: #b0b0b0; font-size: 19.5px; margin-left: 6px; letter-spacing: .9px; }
  .qprice { height: 39px; position: relative; display: flex; align-items: center; border-bottom: 2px solid #a00a0a; font-weight: 700; color: #ff3030; font-size: 27px; }
  .pbox { margin-left: 2px; width: 76px; height: 33px; box-sizing: border-box; border: 1.5px solid #606060; display: flex; align-items: center; justify-content: center; font-size: 27px; margin-bottom: 2px; }
  .chg { margin-left: 44px; display: flex; align-items: center; }
  .tri { width: 0; height: 0; border-left: 12px solid transparent; border-right: 12px solid transparent; border-bottom: 20px solid #ff3030; margin-right: 1px; }
  .pct { margin-left: auto; margin-right: 4px; }

  .lv { display: grid; grid-template-columns: 90px 70px 167px; height: 27px; align-items: center; padding-left: 2px; }
  .lb { font-size: 23px; color: #b0b0b0; white-space: nowrap; line-height: 27px; }
  .lb b { font-size: 21px; }
  .yen { font-size: 20px; margin-left: 3px; }
  .v { font-weight: 700; font-size: 20px; text-align: right; white-space: nowrap; line-height: 27px; }
  .red { color: #ff3030; } .yel { color: #c4c400; } .grn { color: #00e600; } .gry { color: #bcbcbc; } .gry2 { color: #9a9a9a; } .mag { color: #c000c8; }
  .midline { height: 1.5px; background: #2f6fa8; margin: 0 0 2px; }
  .midline i { display: block; width: 48px; height: 1.5px; background: #b87a20; }
  .sec { border-top: 2px solid #a00a0a; }
  .stats { padding-top: 1px; margin-top: .5px; }
  .st { display: grid; grid-template-columns: 90px 70px 68px 99px; height: 28.4px; align-items: center; padding-left: 2px; }
  .lb2 { font-size: 23px; color: #b0b0b0; padding-left: 8px; white-space: nowrap; line-height: 27px; }
  .s2 { height: 91px; box-sizing: border-box; }
  .flows { height: 120px; box-sizing: border-box; padding-top: 2px; }
  .fl { display: grid; grid-template-columns: 138px 60px 69px 62px; height: 28.6px; align-items: center; padding-left: 2px; }
  .barcell { display: flex; align-items: center; }
  .bar { display: block; height: 11px; }
  .bar.red { background: #ff3030; } .bar.grn { background: #00e600; }
  .b36 { width: 36px; } .b4 { width: 4px; } .b6 { width: 6px; } .b26 { width: 26px; }
  .ticks { padding-top: 1.5px; }
  .tk { display: grid; grid-template-columns: 60px 95px 94px 48px 31px; height: 27px; align-items: center; padding-left: 2px; }
  .tl { text-align: left; letter-spacing: .3px; }
  .fg { text-align: center; font-weight: 700; font-size: 20px; }

  /* sidebar */
  .side { width: 37px; flex: none; background: #f0f0f0; display: flex; flex-direction: column; align-items: center; box-sizing: border-box; }
  .si { height: 34.6px; flex: none; display: flex; align-items: center; justify-content: center; width: 100%; color: #2c50a8; font-size: 18px; }
  .sep { height: 11.5px; flex: none; position: relative; width: 100%; }
  .sep::after { content: ""; position: absolute; left: 3px; right: 3px; top: 5px; height: 1px; background: #a8a8a8; }
  .box { width: 23px; height: 21px; background: #fff; border: 1.5px solid #6aa3f2; box-sizing: border-box; display: flex; align-items: center; justify-content: center; flex: none; }
  .txt { color: #2060c8; font-size: 15px; letter-spacing: -1px; }
  .or { color: #f08030; font-size: 17px; font-weight: 700; letter-spacing: 0; }
  .fx { color: #1a5a80; font-size: 12px; border-color: #3a8a80; border-radius: 5px; font-style: italic; letter-spacing: 0; }
  .f5 { font-size: 17px; letter-spacing: 0; font-family: "Liberation Mono", monospace; }
  .rsi { color: #3a4ac8; font-weight: 700; font-size: 17px; letter-spacing: -.6px; }
  .n { font-size: 17px; }
  .day { margin-top: 1.5px; background: #f6f6f6; border-top: 2px solid #a8a8a8; border-left: 2px solid #a8a8a8; box-sizing: border-box; font-size: 19px; }

  /* status */
  .status {
    height: 35px; flex: none; background: #f0f0f0; display: flex; align-items: center; padding-left: 2px; white-space: nowrap;
    color: #222; font-size: 23px;
  }
  .sqi { width: 20px; height: 26px; background: #f0b840; border: 2px solid #d09020; box-sizing: border-box; border-radius: 2px; margin-right: 3px; box-shadow: inset 0 0 0 3px #f8e090; }
  .sl { width: 50px; color: #333; }
  .sl.nx { margin-left: 24px; }
  .sv { color: #e81010; font-weight: 700; font-size: 20px; margin-left: 24px; letter-spacing: .7px; }
  .sv.first { margin-left: 5px; }
  .sk { color: #111; font-weight: 700; font-size: 20px; margin-left: 24px; letter-spacing: .7px; }

  /* watermark overlay */
  .wm {
    position: absolute; left: 1080px; right: 0; top: 1286px; bottom: 0; background: #80acd9;
    display: flex; align-items: center; border-bottom: 2px solid #5f8fbd; box-sizing: border-box;
  }
  .wt { color: #17088c; font-size: 74px; font-weight: 900; margin-left: 23px; width: 372px; letter-spacing: .6px; white-space: nowrap; font-family: "Noto Sans CJK SC", sans-serif; line-height: 1; margin-top: -8px; }
  .wl { margin-left: 38px; flex: none; }
  .wtp { font-size: 9px; fill: #fff; }
  .wu { color: #fff; font-family: "DejaVu Serif", serif; font-weight: 700; font-size: 70px; margin-left: 44px; white-space: nowrap; letter-spacing: -.5px; line-height: 1; margin-top: -10px; }
</style>
